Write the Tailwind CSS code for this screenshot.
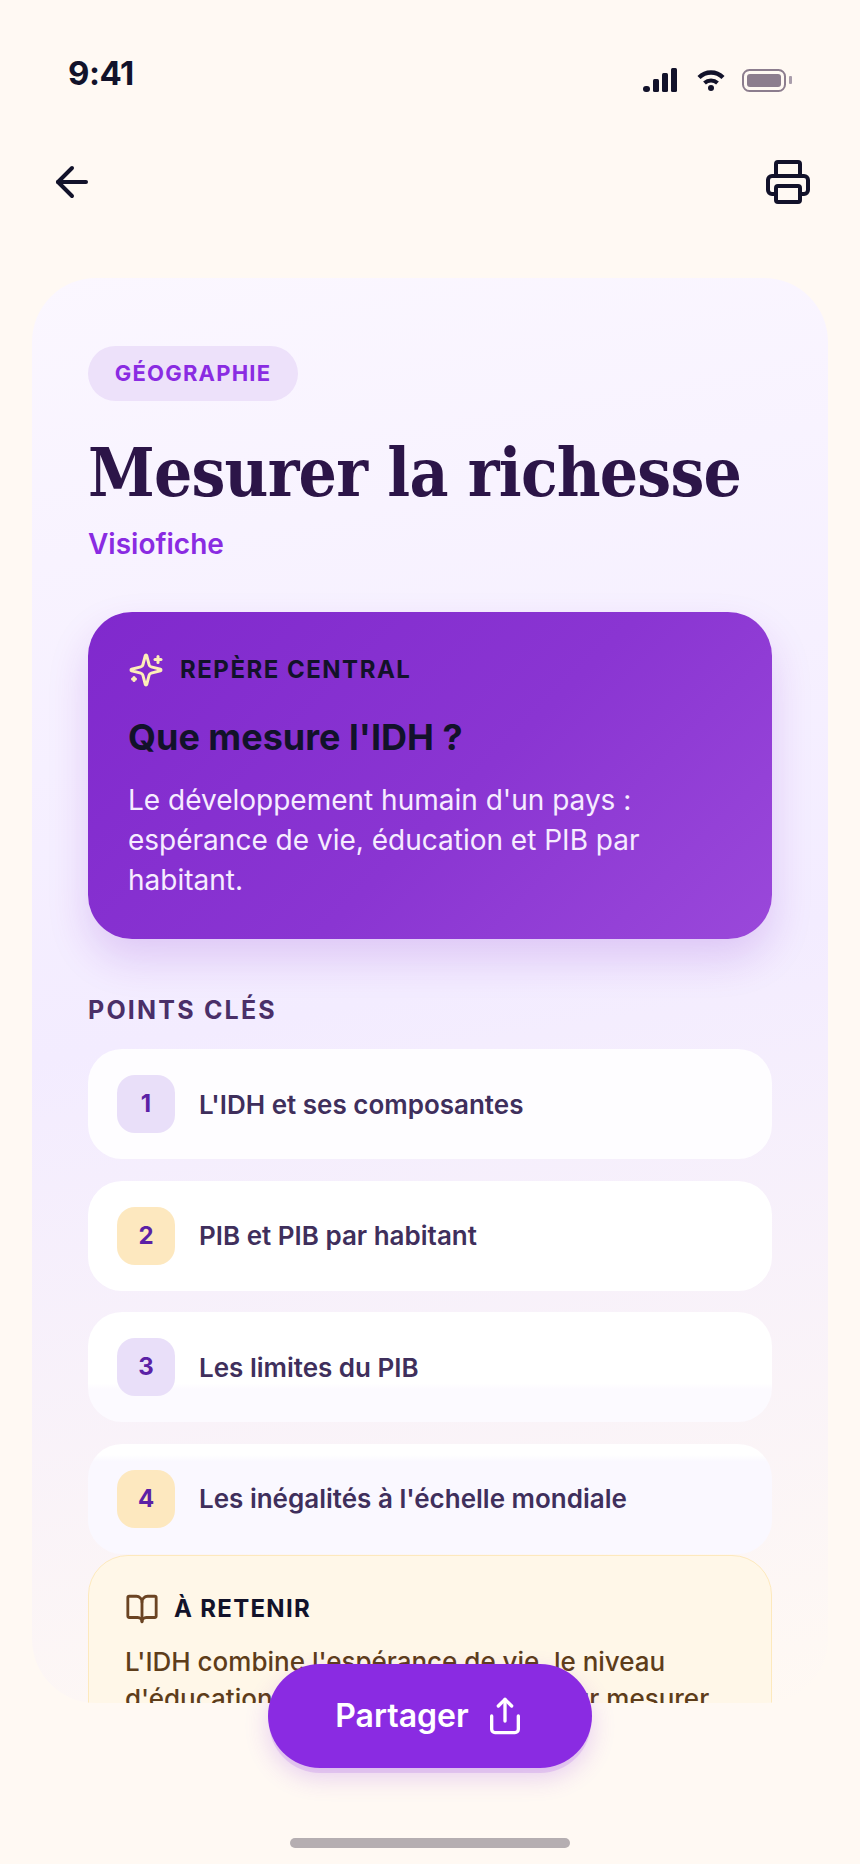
<!doctype html>
<html lang="fr">
<head>
<meta charset="utf-8">
<script src="https://cdn.jsdelivr.net/npm/@tailwindcss/browser@4"></script>
</head>
<body class="m-0">
<div class="relative w-[860px] h-[1864px] overflow-hidden bg-[#fff9f3] font-['Inter',sans-serif]">
  <!-- status bar -->
  <div class="h-[108px] pl-[68px] pr-[67px] flex items-start justify-between">
    <div class="mt-[53px] text-[33px] leading-[40px] font-bold tracking-[-0.5px] text-[#12122a]">9:41</div>
    <svg class="mt-[68px]" width="150" height="26" viewBox="643 68 150 26" fill="none">
      <rect x="643" y="86" width="7" height="6" rx="3" fill="#12122a"/>
      <rect x="653" y="79" width="6" height="13" rx="1.5" fill="#12122a"/>
      <rect x="662" y="73" width="6" height="19" rx="1.5" fill="#12122a"/>
      <rect x="671" y="68" width="6" height="24" rx="1.5" fill="#12122a"/>
      <path d="M699 77.5a17 17 0 0 1 24 0" stroke="#12122a" stroke-width="4.4"/>
      <path d="M704.5 83a9.5 9.5 0 0 1 13 0" stroke="#12122a" stroke-width="4"/>
      <circle cx="711" cy="88" r="3" fill="#12122a"/>
      <rect x="743" y="70" width="42" height="21" rx="6.5" stroke="#8c7d8e" stroke-width="2"/>
      <rect x="747" y="74" width="34" height="13" rx="3" fill="#8c7d8e"/>
      <rect x="789" y="76" width="3" height="8" rx="1" fill="#a99dab"/>
    </svg>
  </div>
  <!-- nav -->
  <div class="h-[148px] pl-[48px] pr-[48px] flex items-start justify-between">
    <svg class="mt-[50px]" width="48" height="48" viewBox="0 0 24 24" fill="none" stroke="#12122a" stroke-width="2" stroke-linecap="round" stroke-linejoin="round"><path d="m12 19-7-7 7-7"/><path d="M19 12H5"/></svg>
    <svg class="mt-[50px]" width="48" height="48" viewBox="0 0 24 24" fill="none" stroke="#12122a" stroke-width="2" stroke-linecap="round" stroke-linejoin="round"><path d="M6 18H4a2 2 0 0 1-2-2v-5a2 2 0 0 1 2-2h16a2 2 0 0 1 2 2v5a2 2 0 0 1-2 2h-2"/><path d="M6 9V3a1 1 0 0 1 1-1h10a1 1 0 0 1 1 1v6"/><rect x="6" y="14" width="12" height="8" rx="1"/></svg>
  </div>
  <!-- panel -->
  <div class="mx-[32px] mt-[22px] h-[1425px] overflow-hidden rounded-[64px] bg-[linear-gradient(170deg,#fbf7ff_0%,#f3ecff_50%,#fff9f3_100%)] px-[56px] pt-[68px]">
    <div class="inline-flex h-[55px] w-[210px] items-center justify-center rounded-full bg-[#ede1fa] text-[22px] font-bold tracking-[1.2px] text-[#8a2be2]">GÉOGRAPHIE</div>
    <h1 class="mt-[32px] font-['DejaVu_Serif',serif] [font-stretch:condensed] text-[67px] leading-[80px] font-bold tracking-[-0.8px] text-[#2c1548] whitespace-nowrap">Mesurer la richesse</h1>
    <p class="mt-[13px] text-[28px] leading-[36px] font-semibold text-[#8a2be2]">Visiofiche</p>

    <section class="mt-[50px] h-[327px] rounded-[44px] bg-[linear-gradient(135deg,#8029cd_0%,#8a35d2_55%,#9a48da_100%)] px-[40px] pt-[40px] shadow-[0_20px_40px_rgba(126,34,206,0.18)]">
      <div class="flex items-center gap-[16px]">
        <svg width="36" height="36" viewBox="0 0 24 24" fill="none" stroke="#fdeeb8" stroke-width="2" stroke-linecap="round" stroke-linejoin="round"><path d="M9.937 15.5A2 2 0 0 0 8.5 14.063l-6.135-1.582a.5.5 0 0 1 0-.962L8.5 9.936A2 2 0 0 0 9.937 8.5l1.582-6.135a.5.5 0 0 1 .963 0L14.063 8.5A2 2 0 0 0 15.5 9.937l6.135 1.581a.5.5 0 0 1 0 .964L15.5 14.063a2 2 0 0 0-1.437 1.437l-1.582 6.135a.5.5 0 0 1-.963 0z"/><path d="M20 3v4"/><path d="M22 5h-4"/><path d="M4 17v2"/><path d="M5 18H3"/></svg>
        <span class="text-[24px] leading-[36px] font-bold tracking-[1.5px] text-[#12122a]">REPÈRE CENTRAL</span>
      </div>
      <h2 class="mt-[26px] text-[36px] leading-[46px] font-bold text-[#12122a]">Que mesure l'IDH ?</h2>
      <p class="mt-[20px] text-[28px] leading-[40px] text-[#f6ecff]">Le développement humain d'un pays : espérance de vie, éducation et PIB par habitant.</p>
    </section>

    <h3 class="mt-[55px] text-[25px] leading-[32px] font-bold tracking-[2.2px] text-[#4a2f68]">POINTS CLÉS</h3>
    <ul class="mt-[23px] flex flex-col gap-[21.5px]">
      <li class="flex h-[110px] items-center gap-[24px] rounded-[34px] bg-[#fefdff] pl-[29px]">
        <span class="flex h-[58px] w-[58px] items-center justify-center rounded-[18px] bg-[#e9dff9] text-[24px] font-bold text-[#5b21a6]">1</span>
        <span class="text-[26px] font-semibold text-[#3f2f5c]">L'IDH et ses composantes</span>
      </li>
      <li class="flex h-[110px] items-center gap-[24px] rounded-[34px] bg-white pl-[29px]">
        <span class="flex h-[58px] w-[58px] items-center justify-center rounded-[18px] bg-[#fde8bf] text-[24px] font-bold text-[#5b21a6]">2</span>
        <span class="text-[26px] font-semibold text-[#3f2f5c]">PIB et PIB par habitant</span>
      </li>
      <li class="flex h-[110px] items-center gap-[24px] rounded-[34px] bg-[linear-gradient(180deg,#ffffff_65%,#fcfaff_70%)] pl-[29px]">
        <span class="flex h-[58px] w-[58px] items-center justify-center rounded-[18px] bg-[#e9dff9] text-[24px] font-bold text-[#5b21a6]">3</span>
        <span class="text-[26px] font-semibold text-[#3f2f5c]">Les limites du PIB</span>
      </li>
      <li class="flex h-[110px] items-center gap-[24px] rounded-[34px] bg-[linear-gradient(180deg,#ffffff_10%,#faf8ff_16%)] pl-[29px]">
        <span class="flex h-[58px] w-[58px] items-center justify-center rounded-[18px] bg-[#fde8bf] text-[24px] font-bold text-[#5b21a6]">4</span>
        <span class="text-[26px] font-semibold text-[#3f2f5c]">Les inégalités à l'échelle mondiale</span>
      </li>
    </ul>

    <section class="mt-[1px] h-[300px] rounded-[40px] border border-[#fde9bd] bg-[#fff7e8] px-[36px] pt-[36px]">
      <div class="flex items-center gap-[15px]">
        <svg width="34" height="34" viewBox="0 0 24 24" fill="none" stroke="#6b4423" stroke-width="2" stroke-linecap="round" stroke-linejoin="round"><path d="M12 7v14"/><path d="M3 18a1 1 0 0 1-1-1V4a1 1 0 0 1 1-1h5a4 4 0 0 1 4 4 4 4 0 0 1 4-4h5a1 1 0 0 1 1 1v13a1 1 0 0 1-1 1h-6a3 3 0 0 0-3 3 3 3 0 0 0-3-3z"/></svg>
        <span class="text-[24px] leading-[34px] font-bold tracking-[1.3px] text-[#12122a]">À RETENIR</span>
      </div>
      <p class="mt-[17px] text-[26px] leading-[37px] font-medium text-[#5e3d1a]">L'IDH combine l'espérance de vie, le niveau d'éducation et le revenu par tête, pour mesurer<br>le développement.</p>
    </section>
  </div>

  <!-- floating button -->
  <button class="absolute left-[268px] top-[1664px] flex h-[104px] w-[324px] items-center justify-center gap-[16px] rounded-full bg-[#8a2be2] text-[32px] font-semibold text-white shadow-[0_6px_0_-1px_rgba(138,43,226,0.15),0_10px_24px_rgba(138,43,226,0.2)]">
    <span>Partager</span>
    <svg width="40" height="40" viewBox="0 0 24 24" fill="none" stroke="#ffffff" stroke-width="2" stroke-linecap="round" stroke-linejoin="round"><path d="M12 2v13"/><path d="m16 6-4-4-4 4"/><path d="M4 12v8a2 2 0 0 0 2 2h12a2 2 0 0 0 2-2v-8"/></svg>
  </button>
  <!-- home indicator -->
  <div class="absolute left-[290px] top-[1838px] h-[10px] w-[280px] rounded-full bg-[#b5aeb1]"></div>
</div>
</body>
</html>
